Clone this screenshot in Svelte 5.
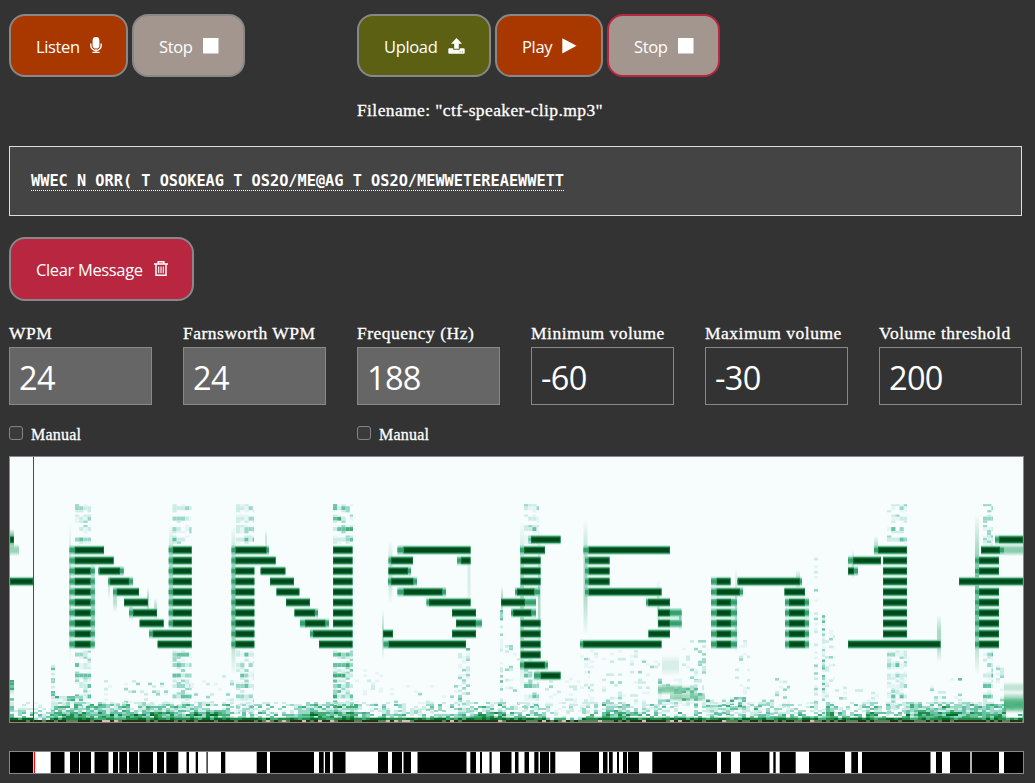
<script>
  const message = 'WWEC N ORR( T OSOKEAG T OS2O/ME@AG T OS2O/MEWWETEREAEWWETT';

  const fields = [
    { label: 'WPM', value: '24', locked: true, manual: true },
    { label: 'Farnsworth WPM', value: '24', locked: true },
    { label: 'Frequency (Hz)', value: '188', locked: true, manual: true },
    { label: 'Minimum volume', value: '-60' },
    { label: 'Maximum volume', value: '-30' },
    { label: 'Volume threshold', value: '200' }
  ];

  // [first row, last row, strong start, strong end, weak start, weak end]
  const tones = [
    [-1, -1, 10, 14], [3, 3, 10, 33],
    [0, 0, 74.7, 104, 69.5], [1, 1, 74.7, 113.7, 69.5], [2, 9, 74.7, 90.7, 69.5, 94.7],
    [2, 2, 99.3, 120, 98, 123.7], [3, 3, 109.7, 129.3, 108, 133], [4, 4, 116.7, 139, 113],
    [5, 5, 124, 148], [6, 6, 133, 157, 129], [7, 7, 139.7, 163.7],
    [8, 8, 152.7, 191.7, 149], [9, 9, 157.7, 191.7], [0, 7, 172.7, 191.7, 168.7],
    [0, 0, 235.3, 266.7, 231.5, 269], [1, 1, 235.3, 275.7, 231.5], [2, 9, 235.3, 254.3, 231.5],
    [2, 2, 260.7, 285.3], [3, 3, 270, 294], [4, 4, 276.5, 299.3], [5, 5, 286, 310],
    [6, 6, 294.5, 315, 294.5, 318], [7, 7, 305, 325.5, 300, 329],
    [8, 8, 313, 352.5, 310], [9, 9, 319, 352.5], [0, 7, 333, 352.5],
    [0, 0, 403.5, 470.5, 397.5], [1, 1, 391, 413, 388.5], [1, 1, 461, 470.5, 457],
    [2, 2, 388.5, 408, 388.5, 411], [3, 3, 391, 413.5, 388, 417], [4, 4, 403.5, 442.5, 397.5, 446],
    [5, 5, 429, 470.5, 426.5], [6, 6, 452, 476], [7, 7, 456, 476, 456, 482],
    [8, 8, 452, 476], [8, 8, 383, 393], [9, 9, 388.5, 466, 383.5],
    [-1, -1, 531, 560.5], [0, 0, 524, 545, 520], [1, 3, 520.7, 540.5],
    [4, 4, 517, 534.5, 515, 540], [5, 5, 501, 525, 501, 536], [6, 6, 513, 531.5, 511, 536],
    [7, 10, 520.7, 540.5], [11, 11, 524, 545, 520, 548], [12, 12, 540.5, 560.5, 534],
    [0, 0, 588.5, 670, 583.5], [1, 3, 588.5, 609.5, 585], [4, 4, 588.5, 661.5, 585],
    [5, 5, 648, 670, 646], [6, 7, 658, 670, 658, 681.5], [8, 8, 648.5, 670], [9, 9, 583, 661.5, 580],
    [3, 3, 716.5, 730.5, 711], [3, 3, 738, 800, 737, 802], [4, 4, 716.5, 740, 711, 743],
    [4, 4, 784.5, 805], [5, 9, 716.5, 731, 711, 737], [5, 9, 789, 805, 785, 809],
    [0, 0, 878, 907, 874], [1, 1, 853, 881, 848], [2, 2, 848, 854, 848, 858],
    [1, 8, 883, 907], [9, 9, 848, 940.5],
    [-1, -1, 999, 1023, 995], [0, 0, 981, 1000, 981, 1004], [1, 2, 979, 999, 975],
    [3, 3, 959, 1023], [4, 9, 979, 999, 975]
  ].flatMap(([first, last, a, b, c = a, d = b]) =>
    Array.from({ length: last - first + 1 }, (_, i) => ({ y: 550.1 + (first + i) * 10.46, a, b, c, d }))
  );

  // Vertical smears beside the stems: x, width, top, bottom, opacity
  const smears = [
    [69, 2, 523, 662, 0.35], [91, 4, 560, 650, 0.55], [169, 4, 523, 630, 0.4], [231.5, 4, 526, 675, 0.7],
    [265, 2, 530, 549, 0.3], [388.5, 4, 540, 604, 0.3], [382, 2, 610, 658, 0.4], [467.5, 3, 546, 612, 0.2],
    [501, 2, 586, 616, 0.5], [520, 4, 522, 690, 0.5], [538, 2.5, 530, 658, 0.5], [583.5, 4, 520, 635, 0.5],
    [657, 2.5, 580, 630, 0.4], [679, 2.5, 608, 630, 0.7], [735, 2, 567, 655, 0.4], [796, 4, 570, 590, 0.4],
    [852, 2, 550, 579, 0.4], [874, 4, 536, 557, 0.35], [937, 4, 615, 662, 0.5], [975, 4, 515, 675, 0.8],
    [108, 2, 575, 599, 0.25], [113, 4, 586, 612, 0.4], [129, 4, 601, 621, 0.35], [147, 2, 587, 615, 0.5],
    [154, 3, 598, 620, 0.4], [10, 4, 529, 549, 0.9], [10, 9, 544, 556, 0.6], [1004, 19, 544, 556, 0.7],
    [1004, 19, 682, 693, 0.35], [1004, 19, 692, 714, 0.8], [1004, 19, 698, 712, 0.9],
    [658, 24, 684, 695, 0.7], [682, 15, 685, 695, 0.4], [670, 35, 692, 702, 0.5], [662, 17, 655, 676, 0.2]
  ];

  let state = 90210;
  const rand = () => {
    state = (state * 1664525 + 1013904223) % 4294967296;
    return state / 4294967296;
  };
  const shades = ['#e5f5f7', '#ccece6', '#99d8c9', '#66c2a4', '#41ae76', '#238b45', '#006d2c'];
  const cells = [];
  const put = (x, y, w, h, level) =>
    cells.push({ x, y, w, h, fill: shades[Math.max(0, Math.min(6, Math.floor(level)))] });

  // Echoes above and below every tall stem: x, width, strength
  for (const [x0, width, gain] of [
    [75, 16, 1], [172.5, 19, 1], [236, 18, 0.85], [333, 20, 1.3], [524, 15, 1], [887, 20, 0.95], [983, 10, 1]
  ]) {
    for (let row = -4; row < 16; row++) {
      if (row >= 0 && row < 10) continue;
      const y = 550 + row * 10.46;
      for (let x = x0; x < x0 + width - 1; x += 4.2) {
        const w = Math.min(4.2, x0 + width - x);
        const lift = (row < 0 ? row * 0.4 + 4.4 : 4) * gain;
        if (rand() < 0.88) put(x, y - 2, w, 4, (0.15 + rand() * 0.85) * lift);
        if (rand() < 0.45) put(x, y - 4, w, 2, rand() * 2.4 * gain);
        if (rand() < 0.45) put(x, y + 2, w, 2.2, rand() * 2.6 * gain);
        if (row > 9 && rand() < 0.35 * gain) put(x, y + 4, w, 3, rand() * 3 * gain);
      }
    }
  }

  // Scattered speckle: x range, y range, density, strength
  for (const [xa, xb, ya, yb, density, strength] of [
    [458, 470, 648, 712, 0.5, 3.2], [500, 503, 610, 712, 0.5, 3.6], [505, 520, 645, 708, 0.2, 2.4],
    [580, 590, 650, 712, 0.2, 2.5], [590, 660, 650, 712, 0.18, 2.5], [658, 682, 676, 712, 0.45, 3.4],
    [682, 706, 640, 686, 0.22, 2.8], [682, 704, 680, 706, 0.45, 4.4], [735, 750, 640, 706, 0.22, 2.2],
    [814, 818, 550, 712, 0.4, 2.8], [822, 825, 610, 712, 0.7, 4], [825, 835, 630, 712, 0.3, 2.4],
    [706, 775, 697, 714, 0.4, 4.6], [775, 790, 678, 714, 0.35, 3], [835, 880, 684, 712, 0.2, 2.4],
    [390, 460, 685, 712, 0.15, 2.6], [100, 172, 680, 705, 0.18, 2.5], [51, 55, 665, 712, 0.7, 4],
    [51, 86, 696, 699, 1, 4.5], [190, 235, 675, 706, 0.14, 2.6], [926, 962, 678, 704, 0.2, 3.2],
    [983, 993, 530, 545, 0.6, 3], [10, 14, 680, 714, 0.7, 5], [545, 580, 675, 710, 0.15, 2.4],
    [996, 1004, 665, 705, 0.3, 2.5], [355, 385, 664, 704, 0.1, 1.8]
  ]) {
    for (let y = ya; y < yb; y += 2.6)
      for (let x = xa; x < xb - 1; x += 4)
        if (rand() < density) put(x, y, Math.min(4, xb - x), 2.6, rand() * strength);
  }

  // Low-frequency floor; energy rises towards the bottom edge
  const energy = (x) =>
    (x > 50 && x < 130) || (x > 132 && x < 230) ? 1
      : x > 295 && x < 358 ? 1.1
      : x > 600 && x < 628 ? 0.9
      : x > 470 && x < 506 ? 0.9
      : x > 822 && x < 833 ? 1.2
      : x > 862 && x < 877 ? 1
      : x > 902 && x < 1004 ? 1.15
      : x > 33 && x < 50 ? 0.4
      : x > 545 && x < 580 ? 0.3
      : 0.55;
  const profile = [2.2, 3.6, 4, 2.9, 3.2, 4.6, 5.2, 4.4];
  for (let x = 10; x < 1023; x += 4) {
    const e = energy(x);
    const w = Math.min(4, 1023 - x);
    profile.forEach((peak, k) => {
      if (rand() < e * (0.65 + k * 0.06))
        put(x, 702 + k * 2, w, 2, (0.4 + rand() * 0.9) * peak * Math.min(1, e + 0.15));
    });
    put(x, 717.7, w, 2.6, e < 0.5 ? rand() * 5 : 4.6 + rand() * 2.4);
    const r = rand();
    cells.push({ x, y: 720, w, h: 2, fill: r < 0.56 ? '#283510' : r < 0.94 ? '#5c824b' : '#d9bdb4' });
  }

  const pulses = [
    [35, 50.7], [64.5, 70], [79, 80], [91, 94.5], [108.5, 113], [118, 119.3], [127, 129], [138, 139.3],
    [153, 157], [164, 166.3], [178.3, 186.5], [189, 195.7], [198, 206.5], [207.7, 221], [225.3, 256.7],
    [267, 270], [314, 319], [323.7, 325], [330, 332.7], [345.5, 378], [388, 392], [402, 403.5],
    [411, 417.5], [466.5, 470.3], [476, 480], [482, 489.5], [491.7, 500], [511.5, 515], [518.5, 524.5],
    [529, 534.3], [538.5, 540], [549, 550.2], [555.3, 580], [599, 603], [607.5, 609], [612.7, 617],
    [619, 623], [627, 628], [639, 652.3], [717, 721], [731, 740], [769.5, 773.3], [775.7, 779.7],
    [795.7, 809], [845, 851.3], [858, 862], [930.5, 936], [942, 950], [970.3, 971.7], [999, 1004]
  ];
</script>

{#snippet stopIcon()}
  <svg class="icon" width="16" height="16" viewBox="0 0 16 16"><path d="M0 0h15.5v15.5H0z" fill="#fff" /></svg>
{/snippet}

<main>
  <section class="controls">
    <div class="group">
      <button class="listen">Listen
        <svg class="icon" width="12" height="17" viewBox="0 0 12 17">
          <rect x="2.6" y="0" width="6.8" height="11.6" rx="3.4" fill="#fff" />
          <path d="M.8 6.5v2a5.2 4.8 0 0 0 10.4 0v-2M6 13.2v2M2.4 15.4h7.2" fill="none" stroke="#fff" stroke-width="1.4" />
        </svg>
      </button>
      <button class="stop">Stop {@render stopIcon()}</button>
    </div>
    <div class="group">
      <button class="upload">Upload
        <svg class="icon" width="17" height="16" viewBox="0 0 17 16">
          <path fill="#fff" fill-rule="evenodd" d="M8.5 0 14 5.7h-3.2v5H6.2v-5H3zM1 10.2h4.2v1.5h6.6v-1.5H16l.7.7v4.1l-.7.7H1l-.7-.7v-4.1zM11.6 13.4v.9h1v-.9zM14 13.4v.9h1v-.9z" />
        </svg>
      </button>
      <button class="play">Play
        <svg class="icon" width="15" height="16" viewBox="0 0 15 16"><path fill="#fff" d="M.3.2 14.5 7.8.3 15.6z" /></svg>
      </button>
      <button class="stop active">Stop {@render stopIcon()}</button>
      <p>Filename: "ctf-speaker-clip.mp3"</p>
    </div>
  </section>

  <div class="message"><span>{message}</span></div>

  <button class="clear">Clear Message
    <svg class="icon" width="14" height="16" viewBox="0 0 14 16">
      <path d="M0 3h14M4.2 2.7V.8h5.6v1.9M2 3v11.3h10V3" fill="none" stroke="#fff" stroke-width="1.5" />
      <path d="M4.7 5.4v6.8M7 5.4v6.8M9.3 5.4v6.8" fill="none" stroke="#fff" stroke-width="1.1" />
    </svg>
  </button>

  <section class="settings">
    {#each fields as field}
      <div class="field">
        <label><span>{field.label}</span><input class:locked={field.locked} readonly value={field.value} /></label>
        {#if field.manual}
          <label class="manual"><input type="checkbox" /><span>Manual</span></label>
        {/if}
      </div>
    {/each}
  </section>

  <svg class="spectrogram" viewBox="10 457 1013 265" preserveAspectRatio="none">
    <defs>
      <linearGradient id="smear" x1="0" y1="0" x2="0" y2="1">
        <stop offset="0" stop-color="#41ae76" stop-opacity="0" />
        <stop offset=".35" stop-color="#41ae76" stop-opacity=".85" />
        <stop offset=".65" stop-color="#41ae76" stop-opacity=".85" />
        <stop offset="1" stop-color="#41ae76" stop-opacity="0" />
      </linearGradient>
    </defs>
    <rect x="10" y="457" width="1013" height="265" fill="#f7fcfd" />
    {#each cells as c}
      <rect x={c.x} y={c.y} width={c.w} height={c.h} fill={c.fill} />
    {/each}
    {#each smears as [x, w, top, bottom, opacity]}
      <rect {x} y={top} width={w} height={bottom - top} fill="url(#smear)" {opacity} />
    {/each}
    {#each tones as t}
      <rect x={t.c} y={t.y - 4.9} width={t.d - t.c} height="9.8" fill="#66c2a4" opacity=".35" />
      <rect x={t.c} y={t.y - 3.4} width={t.d - t.c} height="6.8" fill="#66c2a4" />
      <rect x={t.c} y={t.y - 2} width={t.d - t.c} height="4" fill="#36a068" />
      <rect x={t.a} y={t.y - 4} width={t.b - t.a} height="8" fill="#6fbf99" />
      <rect x={t.a} y={t.y - 3.2} width={t.b - t.a} height="6.4" fill="#15763a" />
      <rect x={t.a + 0.8} y={t.y - 2} width={t.b - t.a - 1.6} height="4" fill="#00491d" />
    {/each}
    <rect x="33" y="457" width="1" height="265" fill="#f00" shape-rendering="crispEdges" />
  </svg>

  <svg class="decoded" viewBox="10 752 1013 21" preserveAspectRatio="none">
    <rect x="10" y="752" width="1013" height="21" fill="#000" />
    {#each pulses as [start, end]}
      <rect x={start} y="752" width={end - start} height="21" fill="#fff" />
    {/each}
    <rect x="33" y="752" width="1" height="21" fill="#ccc" />
    <rect x="34" y="752" width="1" height="21" fill="#f00" />
  </svg>
</main>

<style>
  :global(body) { margin: 0; background: #333; overflow: hidden; }
  main {
    box-sizing: border-box;
    width: 1035px;
    height: 783px;
    padding: 14px 11px 0 9px;
    color: #fff;
    background: #333;
    font: 17.5px/20px "Liberation Serif", serif;
    -webkit-text-stroke: 0.3px #fff;
  }
  .controls { display: grid; grid-template-columns: 348px 1fr; height: 132px; }
  .group { display: flex; flex-wrap: wrap; align-content: flex-start; gap: 0 4px; }
  button {
    box-sizing: border-box;
    display: flex;
    align-items: center;
    justify-content: flex-start;
    height: 63px;
    padding: 2px 0 0 25px;
    border: 2px solid #888;
    border-radius: 16px;
    color: #fff;
    font: 16.5px/24px "Open Sans", sans-serif;
    letter-spacing: -0.35px;
    white-space: nowrap;
    -webkit-text-stroke: 0;
  }
  .icon { flex: none; margin: 0 24px 2px auto; }
  .listen { width: 119px; background: #a83800; }
  .stop { width: 113px; background: #a2968e; }
  .play { width: 108px; background: #a83800; }
  .upload { width: 134px; background: #5c6012; }
  .active { border-color: #b82641; }
  .clear { width: 185px; height: 64px; margin-top: 21px; background: #b8263f; }
  p { flex: 0 0 100%; margin: 23px 0 0; letter-spacing: 0.39px; }
  .message {
    box-sizing: border-box;
    width: 1013px;
    height: 70px;
    padding: 24px 21px;
    border: 1px solid #ddd;
    background: #444;
    font: bold 15.27px/20px "DejaVu Sans Mono", monospace;
    white-space: nowrap;
    -webkit-text-stroke: 0;
  }
  .message span { display: inline-block; height: 19px; border-bottom: 1px dotted #fff; }
  .settings { display: grid; grid-template-columns: repeat(6, 143px); gap: 31px; height: 133px; margin-top: 22px; }
  .field { white-space: nowrap; letter-spacing: 0.5px; }
  .field label > span { display: block; height: 24px; }
  .field input:not([type='checkbox']) {
    box-sizing: border-box;
    display: block;
    width: 143px;
    height: 58px;
    padding: 3px 9px 1px;
    border: 1px solid #888;
    border-radius: 0;
    color: #fff;
    background: #333;
    font: 32.5px/45px "Open Sans", sans-serif;
    letter-spacing: -0.7px;
    outline: none;
    -webkit-text-stroke: 0;
  }
  .field input.locked { background: #666; }
  .field .manual { display: flex; gap: 8px; margin-top: 20px; font-size: 16px; letter-spacing: 0.2px; }
  .manual input {
    appearance: none;
    box-sizing: border-box;
    width: 14px;
    height: 14px;
    margin: 1px 0 0;
    border: 1px solid #858585;
    border-radius: 3px;
    background: #3b3b3b;
  }
  .spectrogram, .decoded { box-sizing: border-box; display: block; width: 1015px; border: 1px solid #888; }
  .spectrogram { height: 267px; }
  .decoded { height: 23px; margin-top: 28px; }
</style>
